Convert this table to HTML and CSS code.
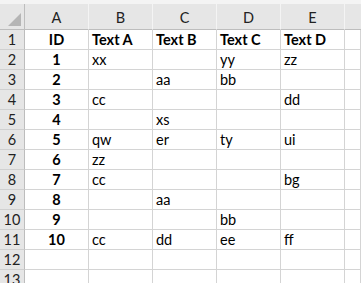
FILE: index.html
```html
<!DOCTYPE html>
<html>
<head>
<meta charset="utf-8">
<link rel="stylesheet" href="styles.css">
</head>
<body>
<div class="topstrip"></div>
<div class="sheet">
  <div class="hd corner"><span class="tri"></span></div>
  <div class="hd col">A</div>
  <div class="hd col">B</div>
  <div class="hd col">C</div>
  <div class="hd col">D</div>
  <div class="hd col">E</div>
  <div class="hd col last"></div>

  <div class="rn">1</div><div class="c id">ID</div><div class="c b">Text A</div><div class="c b">Text B</div><div class="c b">Text C</div><div class="c b">Text D</div><div class="c"></div>
  <div class="rn">2</div><div class="c id">1</div><div class="c">xx</div><div class="c"></div><div class="c">yy</div><div class="c">zz</div><div class="c"></div>
  <div class="rn">3</div><div class="c id">2</div><div class="c"></div><div class="c">aa</div><div class="c">bb</div><div class="c"></div><div class="c"></div>
  <div class="rn">4</div><div class="c id">3</div><div class="c">cc</div><div class="c"></div><div class="c"></div><div class="c">dd</div><div class="c"></div>
  <div class="rn">5</div><div class="c id">4</div><div class="c"></div><div class="c">xs</div><div class="c"></div><div class="c"></div><div class="c"></div>
  <div class="rn">6</div><div class="c id">5</div><div class="c">qw</div><div class="c">er</div><div class="c">ty</div><div class="c">ui</div><div class="c"></div>
  <div class="rn">7</div><div class="c id">6</div><div class="c">zz</div><div class="c"></div><div class="c"></div><div class="c"></div><div class="c"></div>
  <div class="rn">8</div><div class="c id">7</div><div class="c">cc</div><div class="c"></div><div class="c"></div><div class="c">bg</div><div class="c"></div>
  <div class="rn">9</div><div class="c id">8</div><div class="c"></div><div class="c">aa</div><div class="c"></div><div class="c"></div><div class="c"></div>
  <div class="rn">10</div><div class="c id">9</div><div class="c"></div><div class="c"></div><div class="c">bb</div><div class="c"></div><div class="c"></div>
  <div class="rn">11</div><div class="c id">10</div><div class="c">cc</div><div class="c">dd</div><div class="c">ee</div><div class="c">ff</div><div class="c"></div>
  <div class="rn">12</div><div class="c"></div><div class="c"></div><div class="c"></div><div class="c"></div><div class="c"></div><div class="c"></div>
  <div class="rn">13</div><div class="c"></div><div class="c"></div><div class="c"></div><div class="c"></div><div class="c"></div><div class="c"></div>
</div>
</body>
</html>
```
FILE: styles.css
```css
html, body {
  margin: 0;
  padding: 0;
  background: #ffffff;
  overflow: hidden;
}
body {
  width: 361px;
  height: 283px;
  font-family: Lato, "Liberation Sans", sans-serif;
  font-size: 14.5px;
  color: #000;
}
.topstrip {
  height: 4px;
  background: #f4f4f4;
}
.sheet {
  display: grid;
  grid-template-columns: 25px repeat(5, 64px) 1fr;
  grid-template-rows: 26px repeat(13, 20px);
}
.sheet > div {
  box-sizing: border-box;
  border-right: 1px solid #d4d4d4;
  border-bottom: 1px solid #d4d4d4;
  white-space: nowrap;
  overflow: hidden;
}
.hd {
  background: #e6e6e6;
  color: #222;
  display: flex;
  align-items: flex-end;
  justify-content: center;
  padding-bottom: 3px;
  font-size: 14.5px;
}
.sheet > .hd {
  border-right-color: #f4f4f4;
  border-bottom-color: #bdbdbd;
}
.sheet > .corner {
  border-right-color: #bdbdbd;
  position: relative;
}
.tri {
  position: absolute;
  right: 3px;
  bottom: 3px;
  width: 0;
  height: 0;
  border-left: 13px solid transparent;
  border-bottom: 13px solid #b5b5b5;
}
.sheet > .last {
  border-right: none;
}
.sheet > .rn {
  background: #e6e6e6;
  color: #222;
  text-align: center;
  line-height: 20px;
  border-right-color: #bdbdbd;
  border-bottom-color: #d0d0d0;
}
.c {
  line-height: 19px;
  padding-left: 3px;
}
.b {
  font-weight: bold;
}
.id {
  font-weight: bold;
  text-align: center;
  padding-left: 0;
}
```
